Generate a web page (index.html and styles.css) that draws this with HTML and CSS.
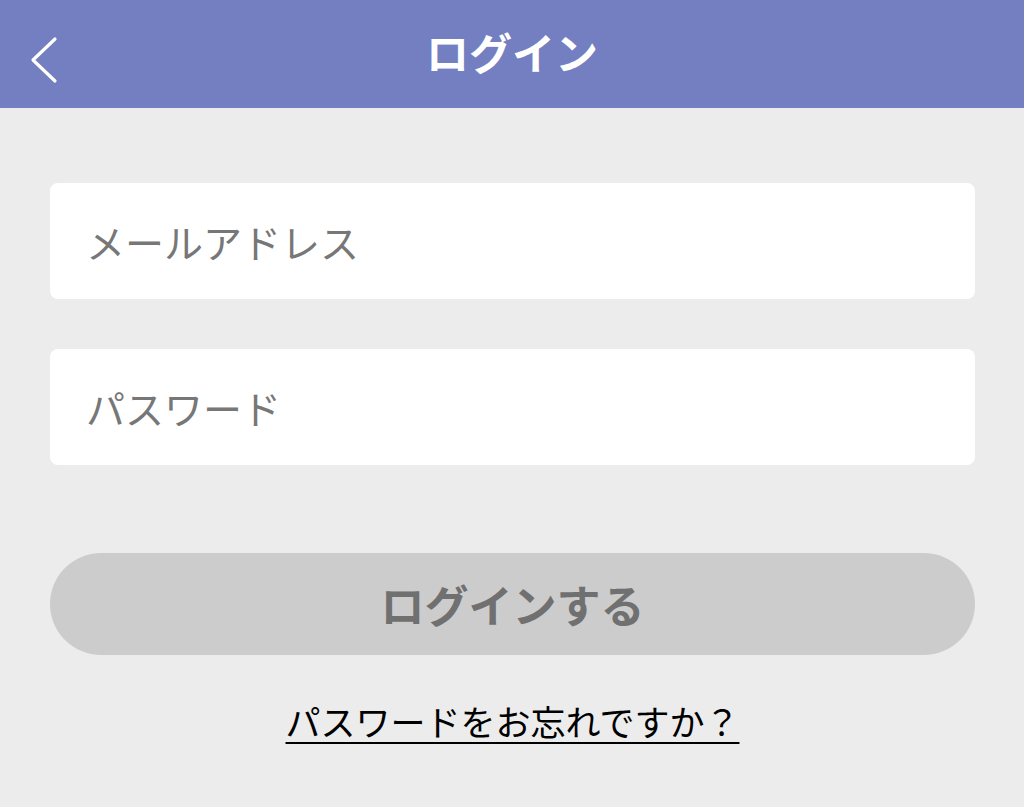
FILE: index.html
```html
<!DOCTYPE html>
<html lang="ja">
<head>
<meta charset="utf-8">
<link rel="stylesheet" href="styles.css">
</head>
<body>
<header class="bar">
  <button class="back" aria-label="戻る">
    <svg width="32" height="48" viewBox="0 0 32 48"><path d="M27 3 L5 24 L27 45" fill="none" stroke="#fff" stroke-width="3.2" stroke-linecap="round" stroke-linejoin="round"/></svg>
  </button>
  <h1 class="title">ログイン</h1>
</header>
<main class="content">
  <div class="field"><span class="placeholder">メールアドレス</span></div>
  <div class="field"><span class="placeholder">パスワード</span></div>
  <div class="submit">ログインする</div>
  <a class="forgot" href="#">パスワードをお忘れですか？</a>
</main>
</body>
</html>
```
FILE: styles.css
```css
html, body {
  margin: 0;
  padding: 0;
  height: 100%;
}
body {
  background: #ececec;
  font-family: "Noto Sans CJK JP", "Noto Sans", sans-serif;
}
.bar {
  height: 108px;
  box-sizing: border-box;
  padding-bottom: 5px;
  background: #737fc0;
  display: flex;
  align-items: center;
  justify-content: center;
  position: relative;
}
.back {
  position: absolute;
  left: 28px;
  top: 36px;
  padding: 0;
  border: 0;
  background: none;
  display: flex;
}
.title {
  margin: 0;
  color: #fff;
  font-size: 43px;
  font-weight: 700;
  line-height: 1;
  letter-spacing: 0;
}
.content {
  padding: 75px 49px 0 50px;
  display: flex;
  flex-direction: column;
}
.field {
  height: 116px;
  background: #fff;
  border-radius: 8px;
  display: flex;
  align-items: center;
  padding-left: 36px;
  margin-bottom: 50px;
}
.placeholder {
  color: #777;
  font-size: 39px;
  line-height: 1;
}
.submit {
  margin-top: 38px;
  height: 102px;
  border-radius: 51px;
  background: #cccccc;
  color: #707070;
  font-size: 44px;
  font-weight: 700;
  display: flex;
  align-items: center;
  justify-content: center;
}
.forgot {
  align-self: center;
  margin-top: 45px;
  color: #000;
  font-size: 35px;
  line-height: 1.2;
  text-decoration: underline;
  text-underline-offset: 6px;
  text-decoration-thickness: 2px;
}
```
